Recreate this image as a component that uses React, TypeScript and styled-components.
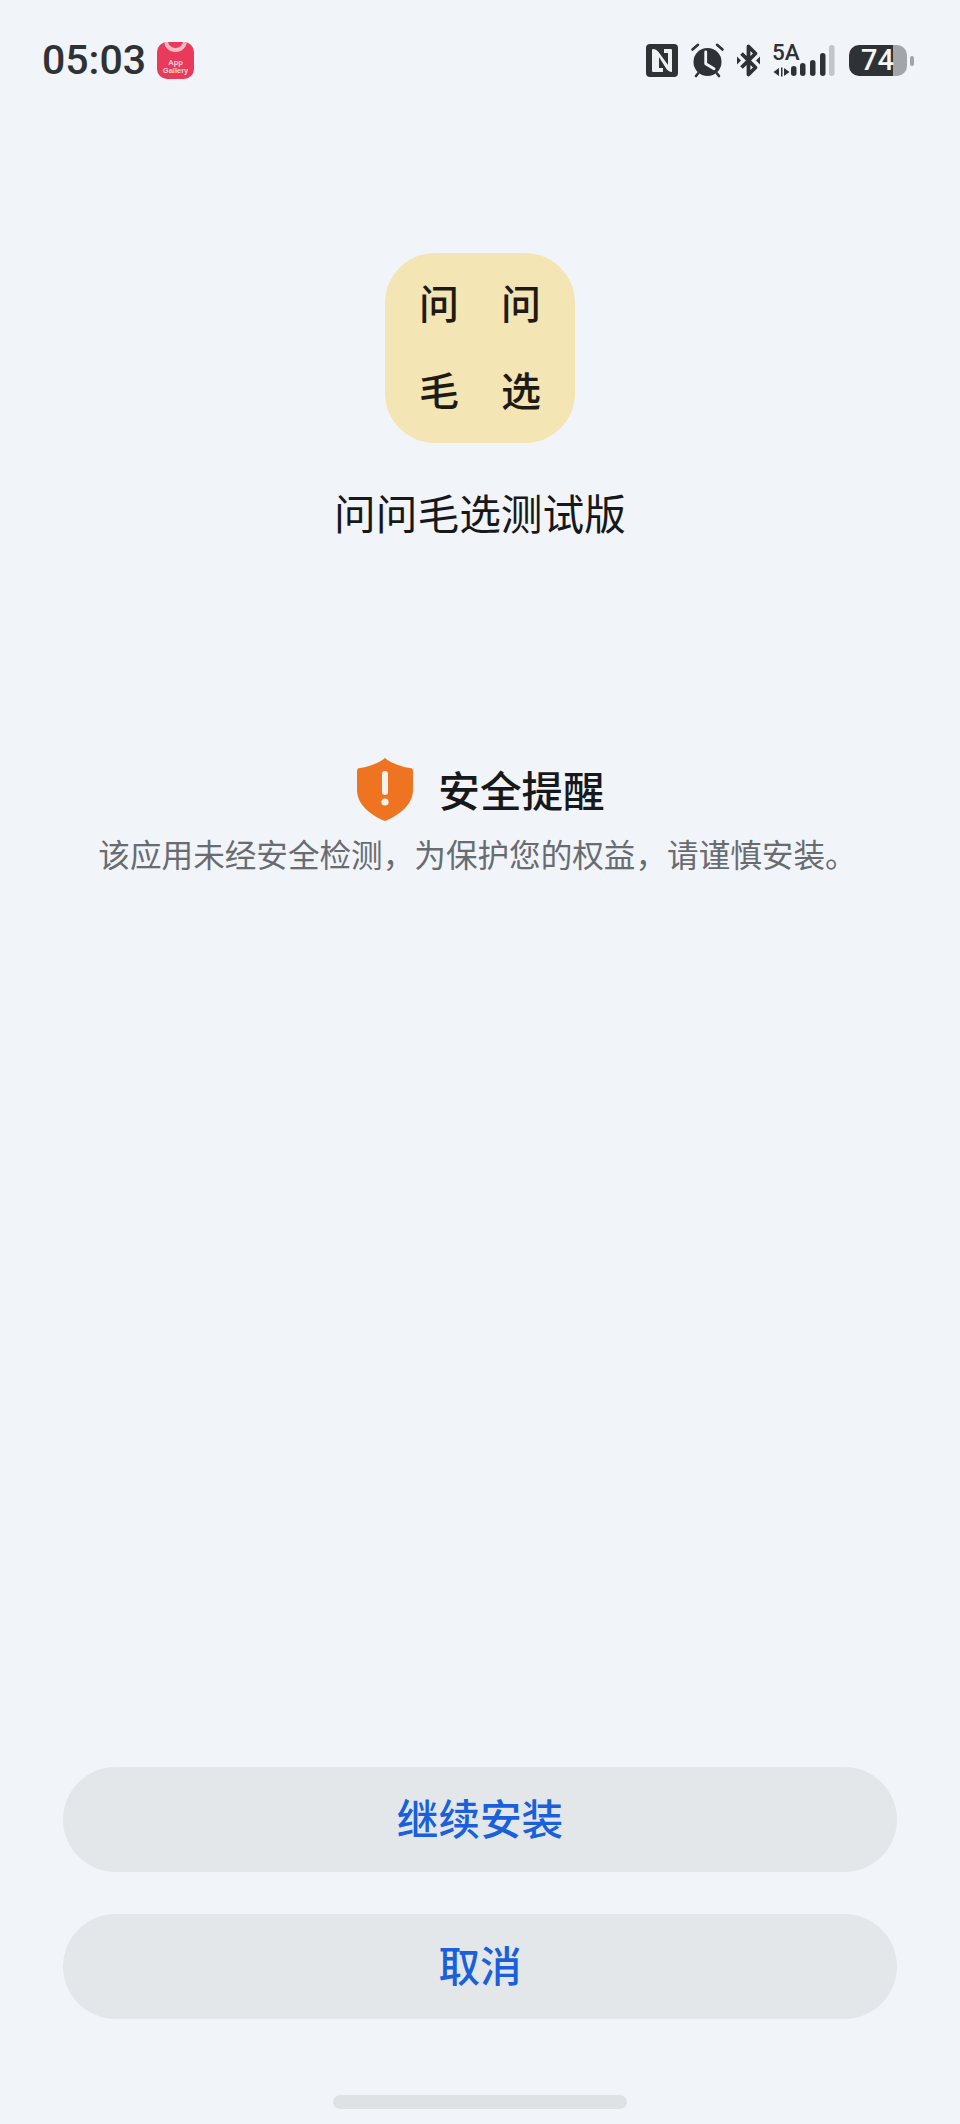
import React from 'react';
import styled, { createGlobalStyle } from 'styled-components';

const GlobalStyle = createGlobalStyle`
  html, body {
    margin: 0;
    padding: 0;
    background-color: #f1f4f9;
  }

  * {
    box-sizing: border-box;
  }
`;

const FONT_STACK = `"Noto Sans CJK SC", "Noto Sans", sans-serif`;
const INK = '#2e3235';

const Screen = styled.div`
  width: 960px;
  height: 2124px;
  display: flex;
  flex-direction: column;
  background-color: #f1f4f9;
  font-family: ${FONT_STACK};
  overflow: hidden;
`;

const StatusBar = styled.div`
  height: 37px;
  margin-top: 42px;
  padding: 0 46px 0 42px;
  display: flex;
  align-items: center;
  justify-content: space-between;
`;

const StatusLeft = styled.div`
  display: flex;
  align-items: center;
  gap: 11px;
`;

const Clock = styled.span`
  font-family: Roboto, Inter, sans-serif;
  font-size: 41px;
  font-weight: 500;
  line-height: 37px;
  color: ${INK};
`;

const GalleryBadge = styled.div`
  position: relative;
  width: 37px;
  height: 37px;
  border-radius: 10px;
  background-color: #e93a5b;
  overflow: hidden;
  display: flex;
  flex-direction: column;
  align-items: center;
  justify-content: flex-end;
  padding-bottom: 4px;
  color: #f8d5da;
  font-family: "Liberation Sans", sans-serif;
  font-size: 7.5px;
  line-height: 8px;
  font-weight: 700;
`;

const BadgeHandle = styled.div`
  position: absolute;
  top: -12px;
  left: 7px;
  width: 23px;
  height: 22px;
  border: 4px solid #f3bcc4;
  border-radius: 50%;
`;

const StatusRight = styled.div`
  display: flex;
  align-items: center;
`;

const StatusIcon = styled.svg<{ $gap: number }>`
  display: block;
  margin-right: ${props => props.$gap}px;
  overflow: visible;
`;

const Hero = styled.div`
  margin-top: 174px;
  display: flex;
  flex-direction: column;
  align-items: center;
`;

const AppIcon = styled.div`
  width: 190px;
  height: 190px;
  padding-bottom: 6px;
  border-radius: 50px;
  background-color: #f3e6b4;
  display: grid;
  grid-template-columns: repeat(2, 82px);
  grid-template-rows: repeat(2, 87px);
  align-content: center;
  justify-content: center;
`;

const IconChar = styled.span`
  display: flex;
  align-items: center;
  justify-content: center;
  font-size: 40px;
  font-weight: 500;
  line-height: 1;
  color: #1d1b14;
`;

const AppName = styled.h1`
  margin: 39px 0 0;
  font-size: 41.7px;
  font-weight: 400;
  line-height: 60px;
  color: #17181a;
`;

const Notice = styled.div`
  margin-top: 216px;
  display: flex;
  flex-direction: column;
  align-items: center;
`;

const NoticeHead = styled.div`
  display: flex;
  align-items: center;
  gap: 25px;
  padding-left: 2px;
`;

const NoticeTitle = styled.h2`
  margin: 0;
  font-size: 41.6px;
  font-weight: 500;
  line-height: 63px;
  color: #17181a;
`;

const NoticeText = styled.p`
  margin: 10px 0 0;
  padding-right: 5px;
  font-size: 31.6px;
  font-weight: 400;
  line-height: 44px;
  color: #686c71;
`;

const Spacer = styled.div`
  flex: 1;
`;

const Actions = styled.div`
  padding: 0 63px;
  display: flex;
  flex-direction: column;
  gap: 42px;
`;

const ActionButton = styled.button`
  height: 105px;
  border: none;
  border-radius: 53px;
  background-color: #e4e7ea;
  color: #1a5fdc;
  font-family: ${FONT_STACK};
  font-size: 41.6px;
  font-weight: 500;
  line-height: 1;
  padding: 0 0 3px;
  cursor: pointer;
`;

const HomeBar = styled.div`
  width: 294px;
  height: 14px;
  margin: 76px auto 15px;
  border-radius: 7px;
  background-color: #dfe2e5;
`;

const Battery = styled.div`
  width: 58px;
  height: 31px;
  border-radius: 10px;
  background: linear-gradient(90deg, ${INK} 76%, #a3a6a8 76%);
  display: flex;
  align-items: center;
  justify-content: flex-end;
  padding-right: 13px;
  color: #f5f6f7;
  font-family: Roboto, Inter, sans-serif;
  font-size: 29px;
  font-weight: 500;
  line-height: 31px;
`;

const BatteryTip = styled.div`
  width: 4px;
  height: 10px;
  margin-left: 3px;
  border-radius: 2px;
  background-color: #a3a6a8;
`;

const NfcIcon = () => (
  <StatusIcon $gap={13} width="32" height="33" viewBox="0 0 32 33">
    <rect width="32" height="33" rx="4" fill={INK} />
    <path d="M7 5c2 0 4 1 5.500 3L22 21V9h-4V5h7c1 0 1 1 1 1v22c-2 0-4-1-5.500-3L13 13v11h4v4H7c-1 0-1-1-1-1V6c0-1 1-1 1-1z" fill="#eef1f4" />
  </StatusIcon>
);

const AlarmIcon = () => (
  <StatusIcon $gap={13} width="33" height="33" viewBox="0 0 33 33">
    <circle cx="16.5" cy="18" r="14" fill={INK} />
    <path d="M1.500 5.500L7 .8M31.500 5.500L26 .8M7 29.500L5 32M26 29.500l2 2.500" stroke={INK} strokeWidth="2.6" strokeLinecap="round" />
    <path d="M14.700 8v11.700l8.300 5" fill="none" stroke="#f1f4f9" strokeWidth="2.800" strokeLinecap="round" strokeLinejoin="round" />
  </StatusIcon>
);

const BluetoothIcon = () => (
  <StatusIcon $gap={12} width="23" height="33" viewBox="0 0 23 33">
    <path d="M4.500 9.500L18.500 23.500 11.500 30.500V2.500L18.500 9.500 4.500 23.500" fill="none" stroke={INK} strokeWidth="3.800" strokeLinejoin="round" />
    <path d="M0 12.500v8l4-4zM23 12.500v8l-4-4z" fill={INK} />
  </StatusIcon>
);

const SignalIcon = () => (
  <StatusIcon $gap={14} width="63" height="33" viewBox="0 0 63 33">
    <text x="0" y="16" fontFamily="Roboto, Inter, sans-serif" fontSize="22.500" fontWeight="500" fill={INK}>5A</text>
    <path d="M7 24v8l-5.500-4zM9 23.500h1.500v9H9zM12 24v8l5.500-4z" fill={INK} />
    <rect x="19" y="22" width="5.500" height="10" rx="2.750" fill={INK} />
    <rect x="28" y="19" width="5.500" height="13" rx="2.750" fill={INK} />
    <rect x="38" y="16" width="5.500" height="16" rx="2.750" fill={INK} />
    <rect x="48" y="9" width="5.500" height="23" rx="2.750" fill={INK} />
    <rect x="57" y="1" width="5.500" height="31" rx="2.750" fill="#c3c6c9" />
  </StatusIcon>
);

export default function App() {
  return (
    <Screen>
      <GlobalStyle />
      <StatusBar>
        <StatusLeft>
          <Clock>05:03</Clock>
          <GalleryBadge>
            <BadgeHandle />
            <span>App</span>
            <span>Gallery</span>
          </GalleryBadge>
        </StatusLeft>
        <StatusRight>
          <NfcIcon />
          <AlarmIcon />
          <BluetoothIcon />
          <SignalIcon />
          <Battery>74</Battery>
          <BatteryTip />
        </StatusRight>
      </StatusBar>

      <Hero>
        <AppIcon>
          <IconChar>问</IconChar>
          <IconChar>问</IconChar>
          <IconChar>毛</IconChar>
          <IconChar>选</IconChar>
        </AppIcon>
        <AppName>问问毛选测试版</AppName>
      </Hero>

      <Notice>
        <NoticeHead>
          <svg width="56" height="63" viewBox="0 0 56 63">
            <path
              d="M28 0c6 5 16 9 25 10 2 0 3 1 3 3v19c0 13-11 24-28 31C11 56 0 45 0 32V13c0-2 1-3 3-3 9-1 19-5 25-10z"
              fill="#ef7422"
            />
            <rect x="25" y="13" width="6" height="24" rx="3" fill="#f6f3ee" />
            <circle cx="28" cy="44" r="3.600" fill="#f6f3ee" />
          </svg>
          <NoticeTitle>安全提醒</NoticeTitle>
        </NoticeHead>
        <NoticeText>该应用未经安全检测，为保护您的权益，请谨慎安装。</NoticeText>
      </Notice>

      <Spacer />

      <Actions>
        <ActionButton>继续安装</ActionButton>
        <ActionButton>取消</ActionButton>
      </Actions>
      <HomeBar />
    </Screen>
  );
}
